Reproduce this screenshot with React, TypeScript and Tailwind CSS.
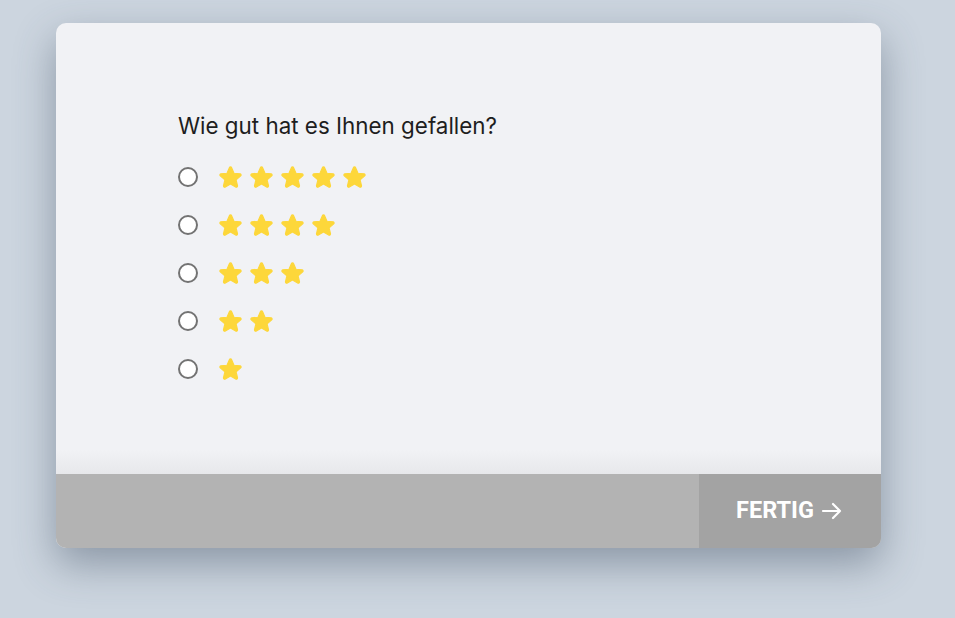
import React from "react";

const Star = () => (
  <svg width="23" height="22" viewBox="3.3 3.4 17.4 16.6" className="block">
    <path
      fill="#fdd73a"
      stroke="#fdd73a"
      strokeWidth="0.9"
      strokeLinejoin="round"
      d="M12 17.27l4.15 2.51c.76.46 1.69-.22 1.49-1.08l-1.1-4.72 3.67-3.18c.67-.58.31-1.68-.57-1.75l-4.83-.41-1.89-4.46c-.34-.81-1.5-.81-1.84 0L9.19 8.63l-4.83.41c-.88.07-1.24 1.17-.57 1.75l3.67 3.18-1.1 4.72c-.2.86.73 1.54 1.49 1.08l4.15-2.5z"
      transform="translate(12 12) scale(0.94) translate(-12 -12)"
    />
  </svg>
);

export default function App() {
  const rows = [5, 4, 3, 2, 1];
  return (
    <div className="w-[955px] h-[618px] bg-[#ccd5df] pt-[23px] pl-[56px] overflow-hidden">
      <div className="w-[825px] h-[525px] rounded-[10px] bg-[#f1f2f5] flex flex-col overflow-hidden shadow-[0_16px_40px_rgba(60,75,95,0.45)]">
        <div className="flex-1 pl-[122px] pt-[88px] relative">
          <div
            className="text-[22.4px] leading-[30px] text-[#1e1e1e]"
            style={{ fontFamily: "Inter, 'Noto Sans', sans-serif" }}
          >
            Wie gut hat es Ihnen gefallen?
          </div>
          <div className="mt-[26px] flex flex-col gap-[28px]">
            {rows.map((n) => (
              <div key={n} className="flex items-center h-[20px]">
                <div className="w-[20px] h-[20px] rounded-full border-2 border-[#737373] bg-white" />
                <div className="ml-[21px] flex gap-[8px]">
                  {Array.from({ length: n }).map((_, i) => (
                    <Star key={i} />
                  ))}
                </div>
              </div>
            ))}
          </div>
          <div className="absolute left-0 right-0 bottom-0 h-[24px] bg-gradient-to-b from-transparent to-[#e7e8eb]" />
        </div>
        <div className="h-[74px] flex bg-[#b3b3b3]">
          <div className="flex-1" />
          <div
            className="w-[182px] bg-[#a3a3a3] flex items-center justify-center gap-[6px] text-white text-[23.5px] font-bold"
            style={{ fontFamily: "Roboto, 'Liberation Sans', sans-serif" }}
          >
            <span>FERTIG</span>
            <svg width="24" height="24" viewBox="0 0 24 24" fill="none" stroke="white" strokeWidth="2.2" strokeLinecap="round" strokeLinejoin="round">
              <path d="M3 12h17M13 5l7 7-7 7" />
            </svg>
          </div>
        </div>
      </div>
    </div>
  );
}
